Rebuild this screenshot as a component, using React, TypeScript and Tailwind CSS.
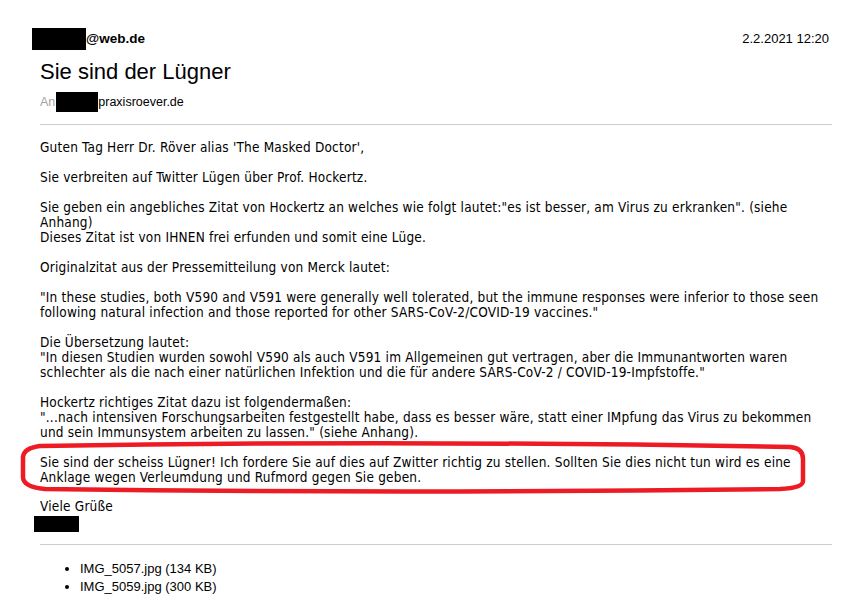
import React from 'react'

const Redact = ({ className }: { className: string }) => <span className={`inline-block bg-black ${className}`} />

const paragraphs: string[][] = [
  ["Guten Tag Herr Dr. Röver alias 'The Masked Doctor',"],
  ['Sie verbreiten auf Twitter Lügen über Prof. Hockertz.'],
  [
    'Sie geben ein angebliches Zitat von Hockertz an welches wie folgt lautet:"es ist besser, am Virus zu erkranken". (siehe',
    'Anhang)',
    'Dieses Zitat ist von IHNEN frei erfunden und somit eine Lüge.',
  ],
  ['Originalzitat aus der Pressemitteilung von Merck lautet:'],
  [
    '"In these studies, both V590 and V591 were generally well tolerated, but the immune responses were inferior to those seen',
    'following natural infection and those reported for other SARS-CoV-2/COVID-19 vaccines."',
  ],
  [
    'Die Übersetzung lautet:',
    '"In diesen Studien wurden sowohl V590 als auch V591 im Allgemeinen gut vertragen, aber die Immunantworten waren',
    'schlechter als die nach einer natürlichen Infektion und die für andere SARS-CoV-2 / COVID-19-Impfstoffe."',
  ],
  [
    'Hockertz richtiges Zitat dazu ist folgendermaßen:',
    '"...nach intensiven Forschungsarbeiten festgestellt habe, dass es besser wäre, statt einer IMpfung das Virus zu bekommen',
    'und sein Immunsystem arbeiten zu lassen." (siehe Anhang).',
  ],
]

const Lines = ({ lines }: { lines: string[] }) => (
  <div>
    {lines.map((l, i) => (
      <div key={i} className="whitespace-nowrap">{l}</div>
    ))}
  </div>
)

export default function App() {
  return (
    <div className="w-[851px] h-[615px] bg-white overflow-hidden text-black px-10 pt-[28px] font-['Liberation_Sans',Arial,sans-serif]">
      <div className="flex items-center justify-between h-[22px] -mr-[18px]">
        <div className="flex items-center -ml-[8px] text-[13.5px] font-bold">
          <Redact className="w-[54px] h-[22px]" />
          <span>@web.de</span>
        </div>
        <div className="text-[13px]">2.2.2021 12:20</div>
      </div>
      <h1 className="text-[22px] leading-[26px] mt-[9px]">Sie sind der Lügner</h1>
      <div className="flex items-center mt-[7px] text-[12.5px] h-5">
        <span className="text-[#a3a3a3]">An</span>
        <Redact className="w-[42px] h-[20px] ml-[1px]" />
        <span>praxisroever.de</span>
      </div>
      <div className="border-t border-[#cccccc] mt-3 w-[792px]" />

      <div className="mt-[15px] text-[13.5px] leading-[15px] font-['DejaVu_Sans_Condensed','DejaVu_Sans',Tahoma,sans-serif] tracking-[0.2px]">
        {paragraphs.map((p, i) => (
          <div key={i} className="mb-[15px]">
            <Lines lines={p} />
          </div>
        ))}
        <div className="relative mt-[15px] mb-[14px]">
          <Lines
            lines={[
              'Sie sind der scheiss Lügner! Ich fordere Sie auf dies auf Zwitter richtig zu stellen. Sollten Sie dies nicht tun wird es eine',
              'Anklage wegen Verleumdung und Rufmord gegen Sie geben.',
            ]}
          />
          <svg className="absolute left-[-40px] top-[-16px] pointer-events-none" width="851" height="60" viewBox="0 0 851 60">
            <path
              d="M40 7 Q400 1 790 8 Q803 9 803 20 L803 42 Q803 49 780 50 Q400 55 45 50 Q23 48 23 38 L23 18 Q24 9 40 7 Z"
              fill="none"
              stroke="#ed1c24"
              strokeWidth="4.5"
            />
          </svg>
        </div>
        <div>Viele Grüße</div>
        <Redact className="w-[45px] h-4 -ml-[6px] mt-[2px] block" />
      </div>

      <div className="border-t border-[#cccccc] mt-[9px] w-[792px]" />
      <ul className="mt-[15px] ml-10 list-disc text-[13px] leading-[18px]">
        <li>IMG_5057.jpg (134 KB)</li>
        <li>IMG_5059.jpg (300 KB)</li>
      </ul>
    </div>
  )
}
